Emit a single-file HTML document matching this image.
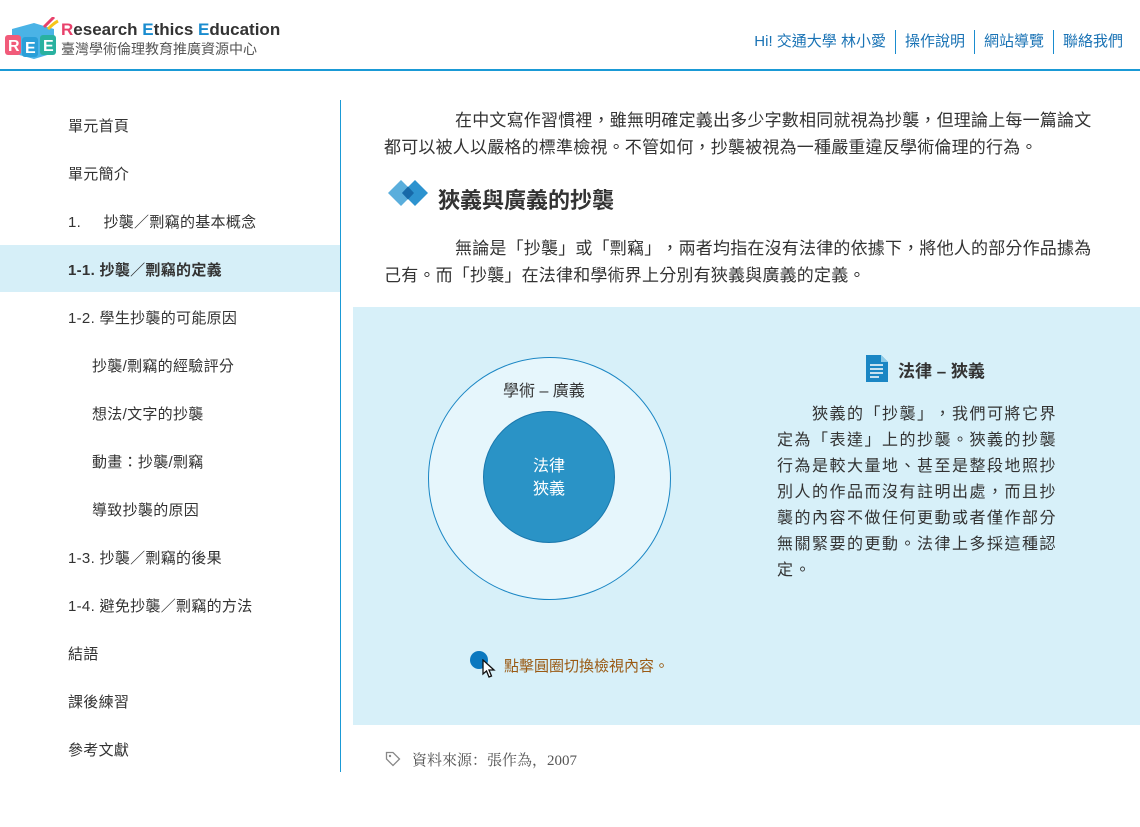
<!DOCTYPE html>
<html><head><meta charset="utf-8"><style>
*{margin:0;padding:0;box-sizing:border-box}
body{width:1140px;height:827px;background:#fff;font-family:"Liberation Sans","Noto Sans CJK TC",sans-serif;color:#333;position:relative;overflow:hidden;text-spacing-trim:space-all;font-feature-settings:"fwid" 0}
.a{position:absolute}
.nav{top:30px;right:8px;font-size:15px;color:#1a73b5;display:flex}
.nav span{padding:0 9px;border-left:1.5px solid #1a8ccf;line-height:24px;display:block}
.nav span:first-child{border-left:none}
.side div{position:absolute;left:68px;font-size:15px;color:#333;letter-spacing:0.3px}
p.t{font-size:17px;line-height:27px;text-indent:71px;color:#333;letter-spacing:0.2px}
</style></head><body>
<svg class="a" style="left:4px;top:17px" width="56" height="42" viewBox="0 0 56 42">
<path d="M8 12 L30 6 L50 12 L50 36 L30 42 L8 36Z" fill="#4ab3e6"/>
<path d="M40 10 Q46 4 50 0" stroke="#e8416b" stroke-width="3" fill="none"/>
<path d="M44 12 Q50 6 54 4" stroke="#f5c518" stroke-width="3" fill="none"/>
<rect x="1" y="18" width="16" height="20" rx="3" fill="#f15b7a"/><text x="4" y="34" font-size="16" font-weight="bold" fill="#fff">R</text>
<rect x="18" y="20" width="16" height="20" rx="3" fill="#2a9fd8"/><text x="21" y="36" font-size="16" font-weight="bold" fill="#fff">E</text>
<rect x="36" y="18" width="16" height="20" rx="3" fill="#29b1a0"/><text x="39" y="34" font-size="16" font-weight="bold" fill="#fff">E</text>
</svg>
<div class="a" style="left:61px;top:20px;font-size:17px;font-weight:bold;color:#333"><span style="color:#e8416b">R</span>esearch <span style="color:#1a8ccf">E</span>thics <span style="color:#1a8ccf">E</span>ducation</div>
<div class="a" style="left:61px;top:39px;font-size:14px;color:#555">臺灣學術倫理教育推廣資源中心</div>
<div class="a nav"><span>Hi! 交通大學 林小愛</span><span>操作說明</span><span>網站導覽</span><span>聯絡我們</span></div>
<div class="a" style="left:0;top:69px;width:1140px;height:2px;background:#1a9ad6"></div>
<div class="a" style="left:340px;top:100px;width:1px;height:672px;background:#1a9ad6"></div>
<div class="a" style="left:0;top:245px;width:340px;height:47px;background:#d6eff8"></div>
<div class="side">
<div style="top:115px">單元首頁</div>
<div style="top:163px">單元簡介</div>
<div style="top:211px">1.&nbsp;&nbsp;&nbsp;&nbsp;&nbsp;抄襲／剽竊的基本概念</div>
<div style="top:259px;font-weight:bold">1-1. 抄襲／剽竊的定義</div>
<div style="top:307px">1-2. 學生抄襲的可能原因</div>
<div style="top:355px;left:92px">抄襲/剽竊的經驗評分</div>
<div style="top:403px;left:92px">想法/文字的抄襲</div>
<div style="top:451px;left:92px">動畫：抄襲/剽竊</div>
<div style="top:499px;left:92px">導致抄襲的原因</div>
<div style="top:547px">1-3. 抄襲／剽竊的後果</div>
<div style="top:595px">1-4. 避免抄襲／剽竊的方法</div>
<div style="top:643px">結語</div>
<div style="top:691px">課後練習</div>
<div style="top:739px">參考文獻</div>
</div>
<p class="a t" style="left:384px;top:107px;width:718px">在中文寫作習慣裡，雖無明確定義出多少字數相同就視為抄襲，但理論上每一篇論文都可以被人以嚴格的標準檢視。不管如何，抄襲被視為一種嚴重違反學術倫理的行為。</p>
<svg class="a" style="left:388px;top:180px" width="42" height="26" viewBox="0 0 42 26"><path d="M0 13 L13 0 L26 13 L13 26Z" fill="#5aaedc"/><path d="M14 13 L27 0 L40 13 L27 26Z" fill="#2d93cf"/><path d="M14 13 L20 6.5 L26 13 L20 19.5Z" fill="#1769a8"/></svg>
<div class="a" style="left:438px;top:183px;font-size:22px;font-weight:bold;color:#333">狹義與廣義的抄襲</div>
<p class="a t" style="left:384px;top:235px;width:718px">無論是「抄襲」或「剽竊」，兩者均指在沒有法律的依據下，將他人的部分作品據為己有。而「抄襲」在法律和學術界上分別有狹義與廣義的定義。</p>
<div class="a" style="left:353px;top:307px;width:787px;height:418px;background:#d7f0f9"></div>
<div class="a" style="left:428px;top:357px;width:243px;height:243px;border-radius:50%;border:1.5px solid #1a86c4;background:#e6f6fc"></div>
<div class="a" style="left:503px;top:377px;font-size:16px;color:#333">學術 – 廣義</div>
<div class="a" style="left:483px;top:411px;width:132px;height:132px;border-radius:50%;background:#2a93c6;border:1.5px solid #1a78ad;color:#fff;font-size:16px;text-align:center;padding-top:43px;line-height:23px">法律<br>狹義</div>
<svg class="a" style="left:866px;top:355px" width="22" height="27" viewBox="0 0 22 27"><path d="M0 0 H15 L22 7 V27 H0Z" fill="#1a86c4"/><path d="M15 0 V7 H22" fill="#8ccbe8"/><path d="M4 10 H17 M4 14 H17 M4 18 H17 M4 22 H13" stroke="#fff" stroke-width="1.6"/></svg>
<div class="a" style="left:898px;top:357px;font-size:17px;font-weight:bold;color:#333">法律 – 狹義</div>
<p class="a t" style="left:777px;top:402px;width:285px;font-size:16px;line-height:26px;letter-spacing:1.5px;text-indent:35px">狹義的「抄襲」，我們可將它界定為「表達」上的抄襲。狹義的抄襲行為是較大量地、甚至是整段地照抄別人的作品而沒有註明出處，而且抄襲的內容不做任何更動或者僅作部分無關緊要的更動。法律上多採這種認定。</p>
<div class="a" style="left:470px;top:651px;width:18px;height:18px;border-radius:50%;background:#0b78bf"></div>
<svg class="a" style="left:482px;top:659px" width="14" height="20" viewBox="0 0 14 20"><path d="M1 1 L1 15 L4.5 12 L7 18 L9.5 17 L7 11 L12 11Z" fill="#fff" stroke="#111" stroke-width="1.3"/></svg>
<div class="a" style="left:504px;top:655px;font-size:15px;color:#9a5a14">點擊圓圈切換檢視內容。</div>
<svg class="a" style="left:385px;top:751px" width="16" height="16" viewBox="0 0 16 16"><path d="M1.5 1.5 H8 L14.5 8 L8 14.5 L1.5 8Z" fill="none" stroke="#888" stroke-width="1.3"/><circle cx="5" cy="5" r="1.2" fill="#888"/></svg>
<div class="a" style="left:412px;top:749px;font-size:15px;color:#555;font-family:'Liberation Serif','Noto Serif CJK SC',serif">資料來源：張作為，2007</div>
</body></html>
